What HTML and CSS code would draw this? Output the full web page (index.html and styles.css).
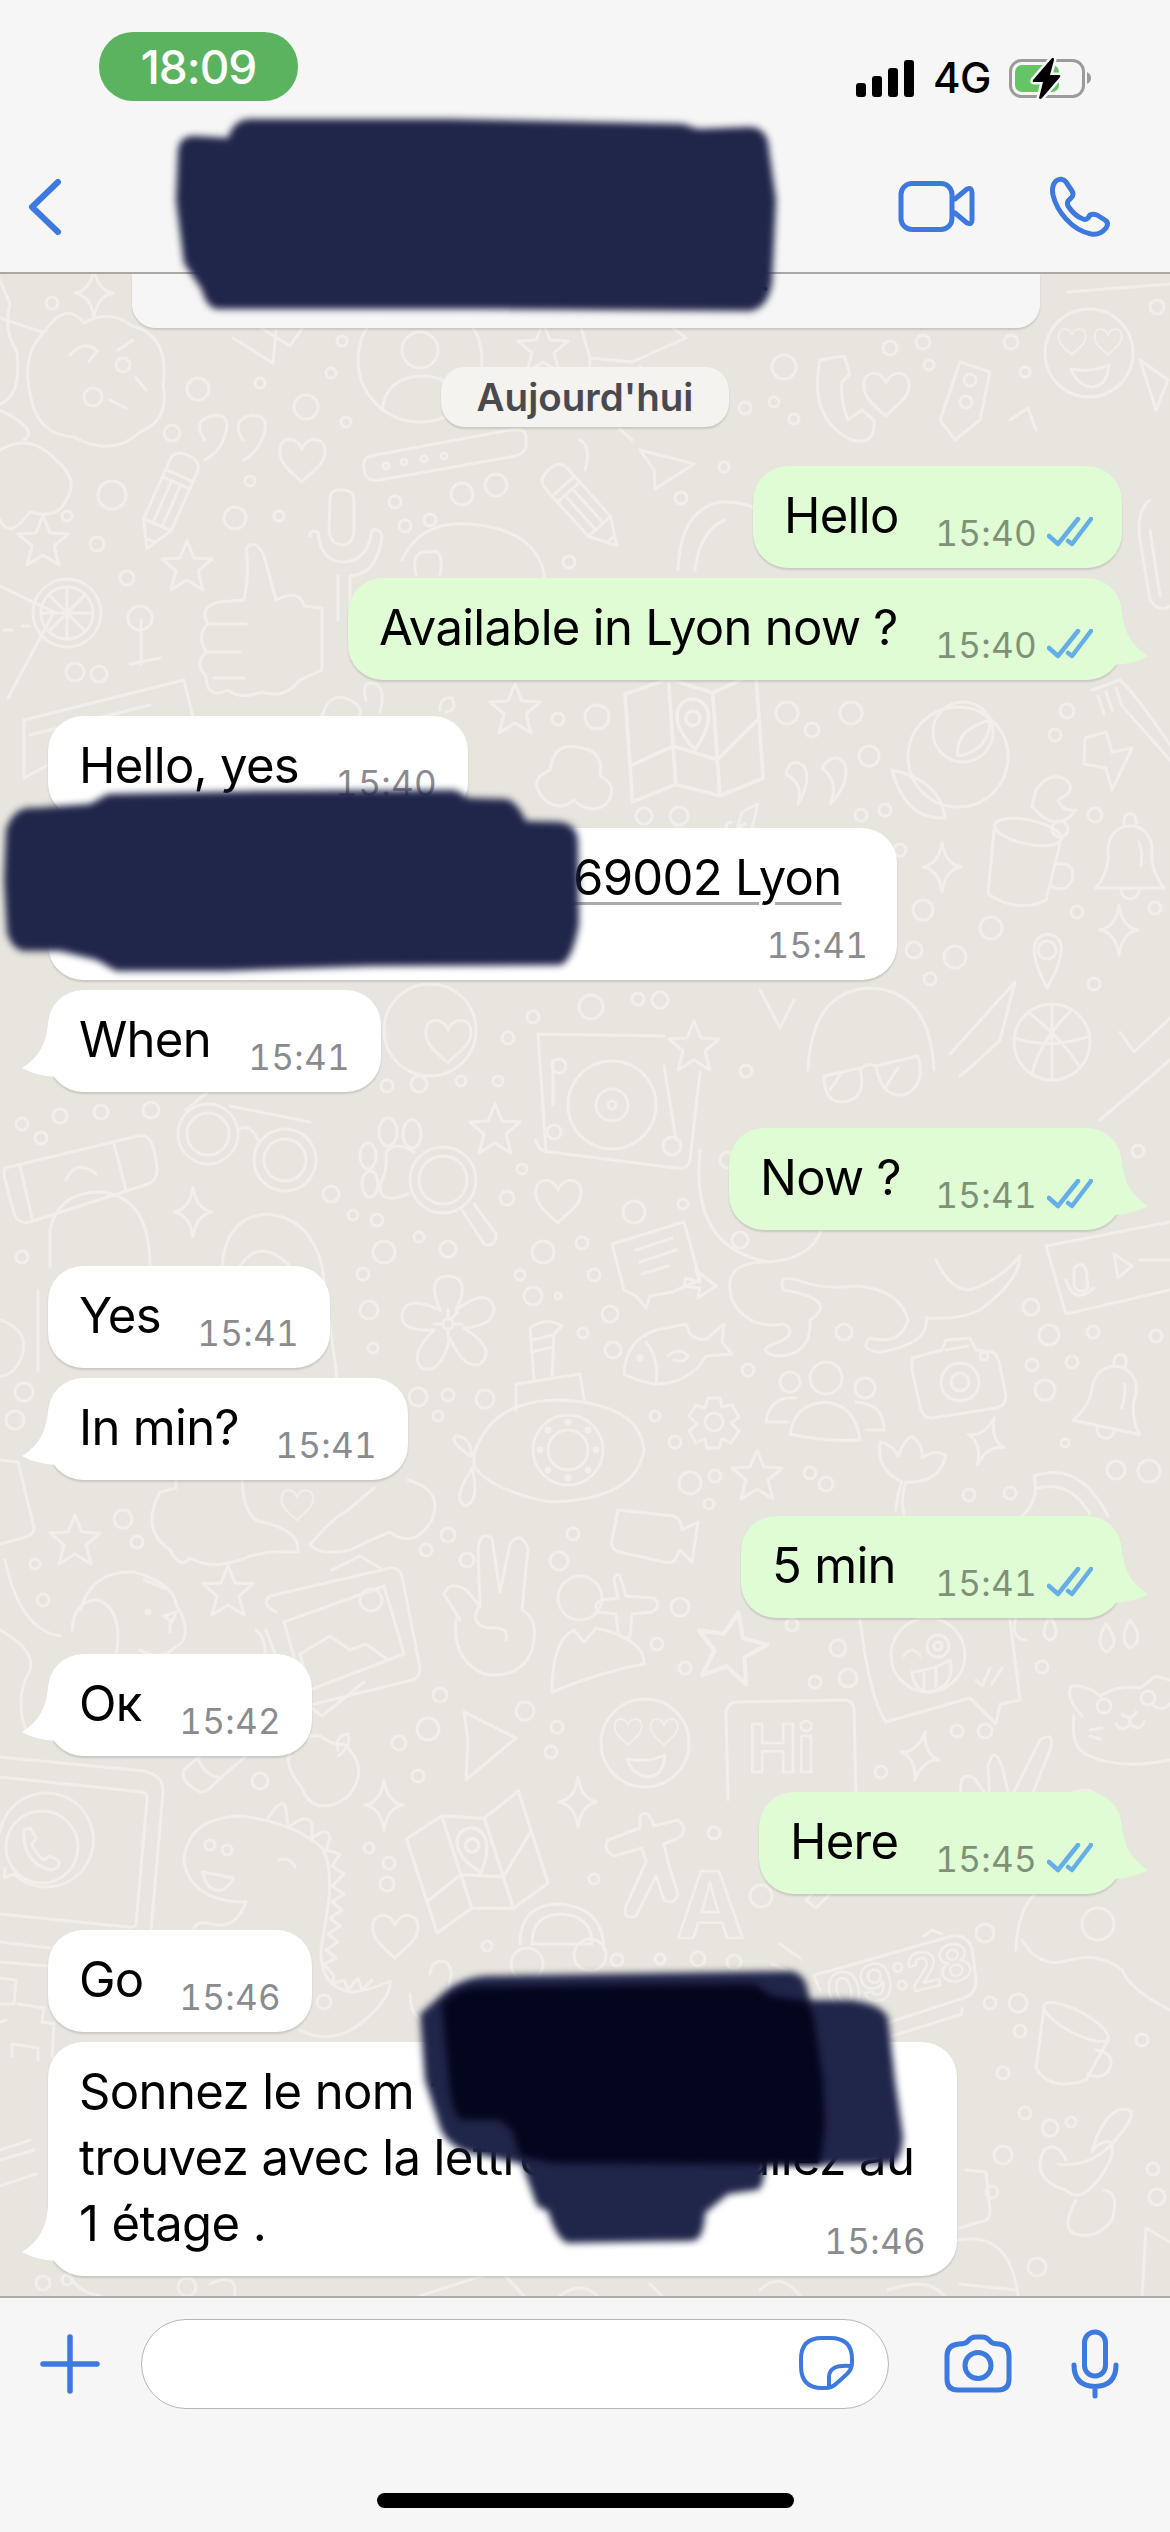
FILE: index.html
```html
<!DOCTYPE html>
<html lang="fr">
<head>
<meta charset="utf-8">
<title>Discussion</title>
<link rel="stylesheet" href="styles.css">
</head>
<body>
<div class="phone">
<svg class="wallpaper" viewBox="0 0 1170 2532" aria-hidden="true">
<defs>
<path id="star" d="M0-25L7-8 25-7 11 5 16 24 0 14-16 24-11 5-25-7-7-8z"/>
<path id="spark" d="M0-25Q3-3 19 0Q3 3 0 25Q-3 3-19 0Q-3-3 0-25z"/>
<path id="heart" d="M0 23C-12 12-24 4-22-10C-20-24-4-22 0-10C6-24 22-22 23-9C24 5 10 12 0 23z"/>
<path id="bell" d="M-34 28Q-20 10-22-10C-22-42 22-42 22-10Q20 10 34 28zM-6-36C-8-50 8-50 6-36M-9 30C-7 42 7 42 9 30M9-18Q13-8 11 6"/>
<g id="face"><circle r="44"/><use href="#heart" transform="translate(-17-12) scale(.6)"/><use href="#heart" transform="translate(19-12) scale(.6)"/><path d="M-18 16Q2 20 20 12Q18 34 2 34Q-12 32-18 16z"/></g>
<g id="pencil"><path d="M-15-38Q-15-50 0-50Q15-50 15-38V26L0 52-15 26zM-15-28H15M-15-20H15M-15 26H15M-5-20V24M5-20V24M-5 43H5"/></g>
<g id="mapsheet"><path d="M-55-38L-18-48 18-34 55-48V40L18 52-18 40-55 52zM-18-48V40M18-34V52M-55 22L-18 8 18 22 55-10"/><path d="M0 12C-22-14-12-30 0-30S22-14 0 12z"/><circle cy="-14" r="6"/></g>
</defs>
<g class="doodle">
<!-- bubbles scattered between the drawings -->
<circle cx="52" cy="303" r="6"/><circle cx="342" cy="341" r="5"/><circle cx="331" cy="373" r="5"/><circle cx="198" cy="389" r="11"/><circle cx="260" cy="383" r="5"/><circle cx="306" cy="407" r="12"/><circle cx="346" cy="422" r="5"/><circle cx="172" cy="433" r="8"/><circle cx="784" cy="367" r="12"/><circle cx="890" cy="348" r="7"/><circle cx="923" cy="342" r="7"/><circle cx="929" cy="365" r="5"/><circle cx="1011" cy="342" r="7"/><circle cx="1025" cy="372" r="5"/><circle cx="794" cy="419" r="5"/><circle cx="1157" cy="307" r="7"/><circle cx="774" cy="402" r="5"/><circle cx="745" cy="408" r="6"/>
<circle cx="112" cy="495" r="14"/><circle cx="235" cy="518" r="11"/><circle cx="250" cy="481" r="5"/><circle cx="279" cy="516" r="5"/><circle cx="67" cy="516" r="5"/><circle cx="97" cy="544" r="7"/><circle cx="127" cy="578" r="7"/><circle cx="462" cy="494" r="11"/><circle cx="496" cy="485" r="11"/><circle cx="395" cy="502" r="6"/><circle cx="430" cy="520" r="6"/><circle cx="405" cy="526" r="6"/><circle cx="569" cy="562" r="6"/><circle cx="681" cy="498" r="6"/><circle cx="724" cy="467" r="5"/><circle cx="75" cy="672" r="9"/><circle cx="99" cy="674" r="8"/><circle cx="558" cy="719" r="6"/><circle cx="597" cy="717" r="12"/><circle cx="787" cy="713" r="11"/><circle cx="851" cy="713" r="11"/><circle cx="812" cy="730" r="7"/><circle cx="869" cy="756" r="10"/><circle cx="1067" cy="711" r="7"/><circle cx="1055" cy="735" r="6"/><circle cx="1095" cy="815" r="7"/><circle cx="885" cy="810" r="6"/><circle cx="861" cy="815" r="6"/><circle cx="644" cy="816" r="8"/><circle cx="679" cy="816" r="9"/><circle cx="1060" cy="829" r="8"/><circle cx="900" cy="850" r="6"/><circle cx="923" cy="910" r="10"/><circle cx="991" cy="928" r="11"/><circle cx="1077" cy="912" r="6"/><circle cx="1155" cy="908" r="6"/><circle cx="914" cy="950" r="8"/><circle cx="955" cy="957" r="11"/><circle cx="930" cy="979" r="6"/><circle cx="1094" cy="984" r="6"/><circle cx="533" cy="1017" r="6"/><circle cx="591" cy="1007" r="12"/><circle cx="638" cy="999" r="6"/><circle cx="660" cy="1000" r="8"/><circle cx="508" cy="1038" r="6"/><circle cx="419" cy="1084" r="8"/><circle cx="461" cy="1081" r="5"/><circle cx="498" cy="1081" r="5"/><circle cx="746" cy="1071" r="6"/><circle cx="387" cy="1086" r="6"/>
<circle cx="22" cy="1124" r="6"/><circle cx="60" cy="1116" r="7"/><circle cx="101" cy="1112" r="7"/><circle cx="151" cy="1110" r="8"/><circle cx="41" cy="1138" r="6"/><circle cx="522" cy="1169" r="5"/><circle cx="507" cy="1198" r="7"/><circle cx="331" cy="1194" r="8"/><circle cx="353" cy="1215" r="5"/><circle cx="377" cy="1220" r="6"/><circle cx="384" cy="1252" r="11"/><circle cx="419" cy="1237" r="5"/><circle cx="448" cy="1249" r="8"/><circle cx="543" cy="1252" r="11"/><circle cx="582" cy="1243" r="6"/><circle cx="634" cy="1212" r="11"/><circle cx="683" cy="1204" r="5"/><circle cx="363" cy="1274" r="6"/><circle cx="369" cy="1310" r="9"/><circle cx="373" cy="1348" r="5"/><circle cx="520" cy="1275" r="5"/><circle cx="533" cy="1296" r="9"/><circle cx="558" cy="1296" r="3"/><circle cx="594" cy="1275" r="6"/><circle cx="610" cy="1314" r="8"/><circle cx="583" cy="1333" r="5"/><circle cx="613" cy="1350" r="8"/><circle cx="485" cy="1399" r="9"/><circle cx="448" cy="1395" r="6"/><circle cx="418" cy="1397" r="9"/><circle cx="438" cy="1416" r="5"/><circle cx="655" cy="1416" r="5"/><circle cx="675" cy="1442" r="6"/><circle cx="748" cy="1370" r="6"/><circle cx="844" cy="1332" r="8"/><circle cx="1049" cy="1335" r="10"/><circle cx="1031" cy="1307" r="8"/><circle cx="1032" cy="1365" r="6"/><circle cx="1072" cy="1362" r="6"/><circle cx="1045" cy="1390" r="10"/><circle cx="1093" cy="1332" r="6"/><circle cx="1156" cy="1336" r="6"/><circle cx="690" cy="1483" r="11"/><circle cx="715" cy="1476" r="6"/><circle cx="709" cy="1504" r="5"/><circle cx="810" cy="1473" r="6"/><circle cx="826" cy="1484" r="7"/><circle cx="969" cy="1495" r="6"/><circle cx="1010" cy="1493" r="6"/><circle cx="1065" cy="1443" r="4"/><circle cx="1116" cy="1470" r="9"/><circle cx="1149" cy="1471" r="11"/><circle cx="24" cy="1392" r="9"/><circle cx="15" cy="1420" r="9"/><circle cx="123" cy="1519" r="9"/><circle cx="137" cy="1542" r="6"/><circle cx="35" cy="1564" r="5"/><circle cx="43" cy="1600" r="6"/><circle cx="448" cy="1535" r="7"/><circle cx="426" cy="1550" r="6"/><circle cx="467" cy="1560" r="7"/><circle cx="559" cy="1561" r="9"/><circle cx="573" cy="1534" r="6"/><circle cx="680" cy="1607" r="9"/><circle cx="657" cy="1644" r="6"/><circle cx="685" cy="1668" r="6"/><circle cx="440" cy="1695" r="7"/><circle cx="525" cy="1711" r="9"/><circle cx="428" cy="1729" r="11"/><circle cx="399" cy="1743" r="7"/><circle cx="557" cy="1727" r="6"/><circle cx="551" cy="1752" r="6"/><circle cx="418" cy="1776" r="6"/><circle cx="260" cy="1781" r="8"/><circle cx="838" cy="1648" r="8"/><circle cx="848" cy="1678" r="9"/><circle cx="815" cy="1682" r="6"/><circle cx="792" cy="1625" r="6"/><circle cx="1042" cy="1667" r="6"/><circle cx="985" cy="1731" r="7"/><circle cx="957" cy="1731" r="6"/><circle cx="881" cy="1772" r="6"/><circle cx="1138" cy="1151" r="6"/><circle cx="22" cy="1257" r="6"/>
<circle cx="369" cy="1848" r="5"/><circle cx="389" cy="1863" r="6"/><circle cx="387" cy="1884" r="7"/><circle cx="594" cy="1879" r="5"/><circle cx="714" cy="1833" r="6"/><circle cx="761" cy="1896" r="11"/><circle cx="487" cy="1946" r="5"/><circle cx="617" cy="1960" r="6"/><circle cx="660" cy="1959" r="5"/><circle cx="698" cy="1959" r="7"/><circle cx="734" cy="1962" r="7"/><circle cx="985" cy="1933" r="9"/><circle cx="990" cy="2003" r="6"/><circle cx="1018" cy="2003" r="9"/><circle cx="1020" cy="2031" r="6"/><circle cx="1142" cy="2040" r="6"/><circle cx="1003" cy="2073" r="6"/><circle cx="1025" cy="2113" r="6"/><circle cx="1050" cy="2128" r="8"/><circle cx="1071" cy="2122" r="5"/><circle cx="1003" cy="2155" r="9"/><circle cx="992" cy="2192" r="6"/><circle cx="1153" cy="2169" r="6"/><circle cx="1157" cy="2197" r="8"/><circle cx="1037" cy="2267" r="9"/><circle cx="43" cy="2283" r="7"/><circle cx="67" cy="2280" r="5"/><circle cx="187" cy="2287" r="9"/><circle cx="324" cy="2002" r="7"/>
<!-- stars, sparkles, hearts -->
<use href="#star" x="543" y="348"/><use href="#star" x="43" y="541"/><use href="#star" x="187" y="566"/><use href="#star" x="515" y="709"/><use href="#star" x="694" y="1046"/><use href="#star" x="495" y="1129"/><use href="#star" x="757" y="1475"/><use href="#star" x="75" y="1540"/><use href="#star" x="228" y="1591"/><use href="#star" transform="translate(731 1647) rotate(12) scale(1.4)"/>
<use href="#spark" x="942" y="867"/><use href="#spark" x="1119" y="930"/><use href="#spark" x="193" y="1212"/><use href="#spark" transform="translate(986 1441) rotate(20)"/><use href="#spark" transform="translate(920 1756) rotate(12)"/><use href="#spark" x="384" y="1805"/><use href="#spark" x="578" y="1802"/><use href="#spark" x="94" y="293"/>
<use href="#heart" x="302" y="459"/><use href="#heart" x="558" y="1200"/><use href="#heart" transform="translate(297 1504) scale(.7)"/><use href="#heart" x="395" y="1935"/><use href="#heart" x="886" y="393"/><use href="#heart" x="448" y="1040"/>
<use href="#face" x="1089" y="353"/><use href="#face" x="645" y="1743"/>
<use href="#pencil" transform="translate(168 501) rotate(24)"/><use href="#pencil" transform="translate(582 507) rotate(-42)"/><use href="#bell" x="1130" y="860"/><use href="#bell" transform="translate(1112 1400) rotate(12)"/>
<use href="#mapsheet" transform="translate(694 735) rotate(-4) scale(1.2)"/><use href="#mapsheet" transform="translate(477 1860) rotate(-18) scale(1.1)"/>
<!-- top -->
<path d="M0 318L42 332M0 404Q22 396 17 352Q3 330 10 304L0 280M45 331Q66 300 84 323Q108 308 132 326Q170 335 163 385Q170 420 140 432Q112 458 74 437Q38 435 31 398Q20 355 45 331zM70 355q14-16 27-4l-8 10M118 350l15-10M110 400l16 8M136 378l10 12"/><circle cx="93" cy="397" r="9"/><circle cx="123" cy="365" r="7"/>
<path d="M233 338L273 363 276 330M258 326L290 346 305 324M0 410Q40 430 24 440M205 440Q190 420 215 415Q230 414 226 432T205 460M243 440Q230 420 252 415Q270 416 264 434T244 460"/>
<circle cx="420" cy="360" r="62"/><circle cx="420" cy="350" r="18"/><path d="M382 410Q386 378 420 376T462 410M580 324L590 358 632 362 686 338 668 324M590 358Q586 400 632 440M640 366L660 420"/>
<path d="M820 360Q808 420 852 440Q876 446 874 420L862 410 848 420Q840 400 842 382L850 374 844 356zM940 420L960 362 990 372 980 420 955 440zM1060 270L1170 262M1068 292L1170 284M1010 420l18-12 8 22 M1140 360L1168 380 1156 410z"/><circle cx="970" cy="380" r="6"/><circle cx="966" cy="402" r="6"/>
<path d="M370 456L510 430Q528 426 526 442Q528 454 510 457L380 480Q364 482 364 468Q362 459 370 456z"/><circle cx="386" cy="466" r="3"/><circle cx="404" cy="462" r="3"/><circle cx="424" cy="459" r="3"/><circle cx="444" cy="456" r="3"/><path d="M640 450L694 464 655 489 654 470zM580 440q12 6 5 30M0 450Q30 432 56 460Q80 480 66 500Q58 520 30 512Q10 540 0 520"/>
<path d="M330 500Q330 488 343 490Q355 490 354 504V530Q353 545 342 545Q330 544 329 530zM310 536Q308 530 318 532Q320 562 345 562Q368 560 372 530Q380 528 382 536Q378 574 350 576V620M338 620V576M678 570Q680 510 720 502Q760 500 780 530M695 570Q700 530 725 520"/>
<!-- thumb, pizza, poster -->
<path d="M244 600Q250 570 246 548Q256 538 264 556L276 600Q300 588 304 606L322 608V670L300 680Q284 700 262 692Q240 700 228 690Q206 700 206 676Q194 664 206 652Q196 634 208 624Q198 606 220 602zM206 652H240M208 624H246M214 678H244M402 560Q420 520 470 524Q540 530 545 580M416 575Q410 550 430 552Q445 548 440 575"/><circle cx="67" cy="613" r="34"/><circle cx="67" cy="613" r="26"/><path d="M67 587V639M41 613H93M49 595L85 631M49 631L85 595M0 586L54 612 8 698M4 630h8M22 626h8M141 664V620M130 664L160 658M24 720L184 680 194 722M30 735L150 705M24 720V778L46 766"/><circle cx="140" cy="618" r="12"/>
<path d="M366 700Q360 680 376 684Q386 690 380 712M322 716Q330 690 350 700T352 724M440 710q0-14 12-12q6 12-6 14"/>
<!-- right side, upper -->
<path d="M1150 500Q1136 510 1140 540L1150 600Q1160 614 1170 606M1150 530L1160 596M1092 690L1120 680Q1134 692 1170 745M1098 696l6 18M1106 692l6 18M1116 688l6 18M1124 708L1170 760"/>
<circle cx="958" cy="757" r="50"/><circle cx="963" cy="732" r="30"/><path d="M958 756Q954 730 990 720Q990 750 958 756zM892 770Q940 780 945 818Q905 820 892 770zM1085 738L1106 732 1112 752 1132 748 1112 790 1106 768 1084 764zM1036 790Q1050 770 1066 780Q1078 790 1058 800Q1062 812 1076 810Q1056 836 1032 806z"/>
<path d="M786 774Q790 756 804 766Q812 780 798 804Q804 784 786 774zM822 768Q834 750 845 764Q850 784 830 804Q840 782 822 768zM545 800Q526 780 550 770Q554 740 582 748Q604 752 600 776Q620 786 606 804Q590 816 574 800Q560 812 545 800zM738 826L742 812 758 804 752 828M738 826a6 5 0 1 1-7-4M752 828a6 5 0 1 1-7-4"/>
<ellipse cx="1028" cy="832" rx="34" ry="12" transform="rotate(12 1028 832)"/><path d="M994 830L988 894Q1018 914 1046 900L1060 844M1056 864Q1076 862 1072 880Q1066 894 1050 886M1047 988Q1022 940 1046 934Q1076 936 1047 988z"/><circle cx="1047" cy="950" r="9"/>
<!-- record player, dog, glasses, basketball -->
<path d="M546 1150L538 1034 664 1036M700 1072L690 1160Q688 1170 676 1168L550 1152Q538 1152 536 1140M664 1066L676 1140M553 1060V1104"/><circle cx="612" cy="1105" r="44"/><circle cx="612" cy="1105" r="16"/><circle cx="612" cy="1105" r="4"/><circle cx="672" cy="1146" r="9"/><circle cx="559" cy="1066" r="7"/><circle cx="554" cy="1132" r="7"/>
<path d="M808 1070Q812 990 870 988Q930 990 934 1070M760 990L780 1028 794 1000M824 1076L860 1068Q868 1100 842 1102Q824 1102 824 1076zM876 1066L918 1056Q926 1084 906 1094Q882 1100 876 1066zM860 1070Q866 1062 876 1066M830 1090l12-18M886 1086l12-18M950 1054L1015 982 1000 1040Q980 1060 960 1076"/><circle cx="430" cy="1030" r="46"/>
<circle cx="1052" cy="1042" r="38"/><path d="M1028 1012Q1064 1040 1080 1068M1072 1010Q1040 1040 1032 1074M1015 1038Q1050 1050 1090 1036M1052 1004V1080M1120 1032L1134 1052 1170 1018M1100 1120L1170 1060M700 1150Q690 1250 770 1262Q830 1256 824 1200"/><circle cx="728" cy="1160" r="8"/><circle cx="740" cy="1240" r="8"/>
<!-- goggles, flask, search -->
<circle cx="208" cy="1134" r="30"/><circle cx="208" cy="1134" r="21"/><circle cx="285" cy="1160" r="31"/><circle cx="285" cy="1160" r="21"/><path d="M238 1130Q250 1122 258 1140M186 1110L222 1080M230 1106L310 1122M5 1168L138 1136Q152 1132 156 1160Q160 1180 148 1184L30 1222Q16 1226 12 1206L4 1176Q4 1170 5 1168zM20 1166L32 1218M114 1144L126 1190M66 1180q10-22 30-6M50 1266V1230Q58 1192 100 1192Q150 1196 150 1266M222 1266Q226 1216 268 1214Q310 1218 322 1266L336 1370Q340 1400 322 1400M38 1290V1370M240 1266q20-30 50 0"/>
<circle cx="443" cy="1180" r="33"/><circle cx="443" cy="1180" r="24"/><path d="M462 1210L484 1244Q496 1248 496 1234L474 1204M408 1194Q378 1206 380 1184Q388 1172 386 1152Q396 1140 414 1152"/><ellipse cx="368" cy="1156" rx="8" ry="13"/><ellipse cx="388" cy="1132" rx="9" ry="14"/><ellipse cx="412" cy="1134" rx="9" ry="14"/><ellipse cx="370" cy="1184" rx="8" ry="13"/>
<!-- note, giraffe, player -->
<path d="M612 1244L684 1222 700 1280 672 1292 650 1296 646 1308 636 1296 624 1290zM636 1250L672 1238M640 1262L676 1250M642 1274L668 1266M686 1278l14 4-4-12 20 16-18 12 2-10-16-2zM770 1262Q720 1260 732 1300Q748 1330 784 1324Q800 1334 774 1344Q756 1350 776 1356Q812 1356 810 1320Q840 1300 784 1290Q776 1274 798 1280Q820 1290 858 1286Q900 1290 908 1320Q900 1346 870 1338Q858 1350 880 1352Q930 1344 926 1318Q960 1320 980 1310Q1020 1280 1020 1256Q1000 1280 970 1290Q950 1290 936 1260M1046 1246L1170 1222M1046 1246L1066 1314 1170 1290M1074 1268q8-8 12 2l2 18q-8 8-14-2zM1066 1280q8 26 28 8M1114 1254L1132 1266 1118 1278zM1140 1260H1170"/>
<!-- flower -->
<path d="M440 1310Q426 1276 448 1276Q472 1278 456 1310Q488 1286 494 1308Q494 1326 464 1328Q498 1350 480 1364Q464 1370 450 1338Q440 1376 422 1368Q408 1356 434 1330Q400 1332 402 1314Q406 1294 440 1310zM448 1318V1310M454 1324h8M442 1324h-8M448 1330v8M452 1318l6-6"/><circle cx="448" cy="1324" r="5"/>
<!-- submarine -->
<path d="M474 1455Q490 1400 560 1400Q640 1404 644 1450Q636 1500 550 1502Q490 1490 474 1466zM516 1410L516 1384 580 1374 584 1400M534 1380L530 1328Q546 1316 562 1326L554 1334 552 1376M532 1340l22-5M532 1352l21-5M474 1466Q450 1500 466 1506Q480 1500 472 1468M470 1456Q448 1440 456 1436Q470 1436 472 1456"/><circle cx="568" cy="1450" r="35"/><circle cx="568" cy="1450" r="20"/><circle class="dot" cx="568" cy="1422" r="2"/><circle class="dot" cx="568" cy="1478" r="2"/><circle class="dot" cx="540" cy="1450" r="2"/><circle class="dot" cx="596" cy="1450" r="2"/><circle class="dot" cx="588" cy="1430" r="2"/><circle class="dot" cx="548" cy="1470" r="2"/><circle class="dot" cx="548" cy="1430" r="2"/><circle class="dot" cx="588" cy="1470" r="2"/>
<!-- fish, people, camera, gear -->
<path d="M624 1374Q626 1334 666 1328L686 1324 690 1334Q704 1344 710 1336L724 1324 722 1342 732 1354 706 1356Q690 1384 654 1384 634 1380 624 1374zM646 1342Q660 1360 656 1384M668 1356q10-10 20 0q-4 8-14 4"/><circle cx="640" cy="1358" r="2"/>
<circle cx="826" cy="1378" r="16"/><circle cx="790" cy="1382" r="10"/><circle cx="865" cy="1388" r="10"/><path d="M790 1434Q794 1404 826 1402Q856 1406 860 1440Q826 1442 790 1434zM788 1422H766Q770 1396 796 1398M866 1430L884 1430Q884 1404 856 1402M912 1358L942 1350 946 1340 970 1338 976 1350 992 1352Q998 1354 1000 1366L1006 1396Q1006 1406 996 1408L932 1418Q922 1418 920 1406L912 1370zM946 1350l22-4"/><circle cx="960" cy="1382" r="19"/><circle cx="960" cy="1382" r="9"/><circle cx="984" cy="1356" r="4"/>
<path d="M708 1398h12l2 9 10-2 7 12-8 6 8 8-8 12-9-4-3 9h-12l-2-9-9 4-7-12 8-7-8-8 7-11 9 3z"/><circle cx="714" cy="1422" r="9"/><path d="M896 1510Q898 1490 902 1482Q876 1470 880 1442Q892 1444 898 1456Q904 1440 912 1436Q924 1446 922 1458Q936 1448 946 1456Q938 1484 906 1482Q900 1500 904 1514M1022 1516Q1040 1500 1034 1476Q1080 1460 1108 1516M1038 1488Q1070 1480 1090 1514"/>
<path d="M0 1320Q30 1330 22 1356Q14 1376 0 1376M0 1460L18 1462 34 1528Q34 1536 22 1538L0 1544M242 1480Q244 1520 262 1522Q300 1530 298 1552Q260 1550 240 1560Q210 1570 190 1558Q180 1570 170 1550Q140 1530 160 1492L176 1488V1480M408 1480Q444 1490 432 1520Q414 1550 390 1532Q370 1540 350 1550Q320 1556 310 1545Q330 1520 348 1510L374 1488"/>
<!-- film camera, photo, hand, person, dog -->
<path d="M618 1510L674 1516Q682 1520 682 1530L698 1522 692 1562 680 1550 676 1558Q674 1564 664 1562L620 1552Q610 1550 612 1540zM276 1612Q260 1604 270 1596L390 1568Q400 1568 402 1576L420 1668Q420 1678 412 1680L306 1706Q292 1706 290 1694L266 1630M284 1622L384 1586 404 1654 304 1692zM310 1690L300 1654 330 1636 350 1650 366 1644 388 1660M332 1570L360 1556 380 1568M256 1630Q268 1640 264 1660M312 1708L322 1716 364 1682"/><circle cx="371" cy="1600" r="11"/>
<path d="M460 1620L444 1594Q450 1580 466 1590L480 1606 478 1550Q480 1530 492 1538L500 1592 510 1544Q520 1530 528 1548L522 1610Q540 1620 532 1650Q520 1680 484 1674Q452 1660 456 1620M478 1608Q470 1624 488 1628Q510 1626 506 1640"/><circle cx="580" cy="1598" r="22"/><path d="M552 1692Q552 1640 574 1630L584 1642 596 1628Q646 1640 644 1664Q600 1672 552 1692zM620 1576l6 20 28 2q8 8-2 14l-20 2-2 22q-8 6-12-4l-2-18-18-2q-6-8 4-12l16-2-4-18q2-8 6-4z"/>
<path d="M80 1610Q92 1570 134 1572Q174 1584 176 1604Q196 1638 174 1648Q160 1662 140 1650M72 1630Q74 1600 98 1600Q124 1610 116 1656M144 1580l20 8M5 1560Q20 1630 60 1636M0 1630Q36 1650 30 1670Q14 1698 26 1730M164 1616l12-4-4 10zM170 1624v8"/><circle class="dot" cx="148" cy="1612" r="2"/>
<path d="M464 1712L516 1738 466 1780 468 1740zM302 1788Q280 1762 294 1746Q304 1734 320 1736Q334 1746 344 1744Q362 1760 358 1778Q350 1806 320 1806Q306 1802 302 1788zM338 1750Q334 1736 348 1734Q352 1746 338 1756M200 1756L184 1770Q180 1782 200 1792Q208 1792 214 1784L248 1754M198 1758Q204 1776 222 1778"/>
<!-- emoji note, greeting card, cat -->
<path d="M860 1620Q870 1700 886 1722L970 1698 996 1724 1000 1704 1020 1700 1010 1620M1026 1640q-16-2-10-22l6-6M1050 1616q12 20 0 24q-12-4 0-24zM1106 1624q16 20 0 28q-12-8 0-28zM1130 1620q16 20 0 28q-12-8 0-28z"/><circle cx="928" cy="1655" r="37"/><path d="M912 1672Q934 1670 950 1660Q956 1686 930 1692Q914 1692 912 1672zM924 1672v16M936 1668v18M904 1656q8-12 16 0M976 1680l6 6 8-18M992 1684l10-16"/><circle cx="938" cy="1646" r="11"/><circle cx="938" cy="1646" r="4"/>
<path d="M736 1702L844 1700Q852 1700 854 1708L856 1800M726 1712Q728 1702 736 1702M726 1712L728 1800"/><text class="doodle-text" x="748" y="1772" font-size="66">Hi</text>
<path d="M1082 1716Q1064 1696 1072 1686Q1086 1684 1100 1696Q1120 1684 1140 1688L1156 1676 1170 1680M1074 1716Q1070 1750 1090 1756Q1120 1770 1170 1760M1122 1714q8 8 14-2M1130 1718v6q-8 10-14 0M1130 1724q10 8 14-2M1154 1706q10 6 16-2M1090 1730l12-2M1090 1736l10 3"/><circle cx="1104" cy="1706" r="7"/><circle cx="1148" cy="1698" r="7"/><path d="M962 1800Q956 1770 974 1778L990 1800 988 1766Q994 1744 1002 1766L1010 1800 1040 1740Q1056 1730 1050 1750L1030 1800M1060 1800Q1090 1780 1100 1800"/>
<!-- call card, dinosaur, letters -->
<path d="M0 1757L144 1771Q164 1776 163 1792L151 1930M0 1777L142 1792Q148 1793 147 1800L136 1924Q135 1928 128 1927L0 1914M0 1942L50 1948M0 1962L48 1966"/><path d="M5 1868L4 1878 14 1874A47 47 0 1 0 0 1832"/><path d="M24 1830Q22 1862 50 1870Q62 1868 58 1860L50 1856 44 1860Q34 1852 32 1844L36 1838 30 1828z"/><circle cx="42" cy="1847" r="36"/>
<path d="M194 1928Q198 1920 212 1924Q236 1930 246 1902Q192 1902 184 1862Q186 1818 240 1816Q294 1822 322 1848Q332 1864 329 1900L321 1950Q320 1988 352 1992Q372 1990 390 1981Q392 1998 360 2024Q330 2046 300 2030M268 1818Q284 1794 286 1810L288 1828Q306 1812 312 1824L312 1838Q328 1826 330 1838L326 1850 340 1854 332 1866 344 1874 332 1886 344 1894 332 1902 342 1910 330 1918 340 1926 328 1934 338 1942 326 1950 336 1958 324 1964 334 1976 332 1984 344 1980 348 1990 358 1978 362 1990 372 1980M203 1872Q206 1892 222 1890Q232 1884 233 1878zM279 1860Q290 1856 295 1867"/><circle cx="210" cy="1845" r="5"/><circle cx="227" cy="1850" r="5"/>
<path d="M608 1840L640 1828 640 1816Q648 1808 654 1826L678 1820Q690 1830 678 1838L664 1844 668 1862 678 1894Q674 1906 664 1900L656 1876 636 1916Q622 1920 626 1906L646 1862 642 1848 614 1856Q602 1850 608 1840z"/><text class="doodle-text" x="676" y="1938" font-size="92">A</text>
<path d="M520 1944Q520 1904 560 1904Q604 1908 604 1950M532 1944Q532 1914 562 1914Q592 1916 592 1944zM430 1974Q432 1958 446 1962Q454 1970 450 1980L446 2010M410 1994Q410 2012 420 2020"/><circle cx="527" cy="1964" r="16"/><circle cx="590" cy="1955" r="16"/>
<path d="M826 1972L952 1936Q966 1934 972 1948L976 1980Q976 1994 964 1998L884 2024M820 1990L814 1976Q816 1974 826 1972M892 2036L962 2014V2008M924 1936l8-6 10 4M780 1944l20 14M772 1964l14 6M806 1900l24-26 12 8-26 26z"/><text class="doodle-text" x="832" y="2012" font-size="50" transform="rotate(-14 832 2012)">09:28</text>
<circle cx="1098" cy="1924" r="16"/><path d="M1016 1950Q1018 1890 1060 1880Q1090 1860 1080 1890M1170 2010Q1130 1990 1122 1970Q1100 1952 1070 1960Q1040 1970 1022 1940M0 1978L16 1980 14 2004H0M18 2004L44 2008 42 2022 54 2024 52 2056M0 2022L6 2020M12 2056V2044L38 2048V2060"/>
<ellipse cx="1076" cy="2022" rx="36" ry="11" transform="rotate(28 1076 2022)"/><path d="M1044 2008L1036 2068Q1050 2092 1086 2080L1108 2040M1096 2050Q1118 2054 1108 2072Q1098 2080 1088 2074M1058 2164Q1100 2170 1130 2120Q1136 2106 1118 2110Q1100 2120 1092 2152Q1100 2140 1110 2142Q1118 2154 1098 2180Q1080 2204 1066 2190Q1030 2180 1044 2150Q1056 2140 1066 2160M1076 2200Q1060 2230 1076 2234Q1096 2240 1112 2220Q1120 2192 1104 2190M0 2150L30 2140M0 2160L34 2150M0 2186L36 2174M966 2170L986 2172 990 2210Q990 2222 980 2222L960 2228M958 2240Q1010 2230 1018 2296M960 2284L1016 2290M1146 2228L1170 2242M1146 2228L1142 2296"/>
<path d="M66 2260Q68 2290 100 2296M210 2284Q240 2270 234 2300M420 2296L500 2270 524 2296M560 2296Q580 2280 598 2296M650 2284L662 2296M760 2290Q780 2270 800 2296M888 2290Q930 2276 944 2296"/>
</g>
</svg>
<header class="top">
<div class="status">
<div class="clock">18:09</div>
<div class="indicators">
<svg width="58" height="37" viewBox="856 59 58 37"><rect x="856" y="82" width="10" height="14" rx="3"/><rect x="872" y="75" width="10" height="21" rx="3"/><rect x="888" y="67" width="10" height="29" rx="3"/><rect x="904" y="59" width="10" height="37" rx="3"/></svg>
<span class="network">4G</span>
<svg width="84" height="46" viewBox="1008 54 84 46"><rect x="1010.5" y="59.500" width="73" height="36" rx="11" fill="none" stroke="#9b9b9b" stroke-width="3"/><path d="M1087 71q4 2 4 6t-4 6z" fill="#9b9b9b"/><rect x="1015" y="64" width="44" height="27" rx="7" fill="#65c466"/><path d="M1052 57L1033 79Q1032 81 1034 81H1043L1039 97Q1040 99 1042 97L1060 76Q1061 74 1059 74H1050L1054 59Q1054 56 1052 57z" stroke="#f6f6f6" stroke-width="5" paint-order="stroke"/></svg>
</div>
</div>
<nav class="nav">
<svg class="line-icon back" width="38" height="62" viewBox="26 176 38 62"><path d="M58 182L32 207 58 232" stroke-width="6"/></svg>
<div class="calls">
<svg class="line-icon" width="80" height="56" viewBox="897 176 80 56"><rect x="901" y="180.500" width="51" height="46" rx="11"/><path d="M955 196L967 186Q972 184 972 190V217Q972 222 967 220L955 210"/></svg>
<svg class="line-icon" width="64" height="64" viewBox="1048 172 64 64"><path d="M1056 178C1059 175 1064 176 1066 179L1072 188C1074 191 1073 193 1071 195L1068 198C1067 200 1067 201 1068 203C1072 209 1077 214 1083 216C1085 217 1087 216 1088 215L1090 212C1092 211 1094 211 1097 212L1105 217C1108 219 1108 222 1106 225C1102 230 1097 232 1091 231C1072 227 1057 209 1053 192C1052 187 1052 182 1056 178z"/></svg>
</div>
</nav>
</header>
<main class="chat">
<div class="notice">.</div>
<div class="day">Aujourd'hui</div>
<div class="msg out" style="width:369px"><span class="text">Hello</span><span class="time">15:40</span><svg class="ticks" viewBox="0 0 46 30"><path d="M2 19l9 8L31 2M21 24l4 3L44 2"/></svg></div>
<div class="msg out" style="width:774px"><span class="text">Available in Lyon now ?</span><span class="time">15:40</span><svg class="ticks" viewBox="0 0 46 30"><path d="M2 19l9 8L31 2M21 24l4 3L44 2"/></svg><svg class="tail" viewBox="0 0 34 62"><path d="M0 0H8Q9 32 34 47Q20 55 0 56z"/></svg></div>
<div class="msg in turn" style="width:420px"><span class="text">Hello, yes</span><span class="time">15:40</span></div>
<div class="msg in address" style="width:849px"><span class="text link">69002 Lyon</span><span class="time">15:41</span></div>
<div class="msg in" style="width:333px"><span class="text">When</span><span class="time">15:41</span><svg class="tail" viewBox="0 0 34 62"><path d="M0 0H8Q9 32 34 47Q20 55 0 56z"/></svg></div>
<div class="msg out turn" style="width:393px"><span class="text">Now ?</span><span class="time">15:41</span><svg class="ticks" viewBox="0 0 46 30"><path d="M2 19l9 8L31 2M21 24l4 3L44 2"/></svg><svg class="tail" viewBox="0 0 34 62"><path d="M0 0H8Q9 32 34 47Q20 55 0 56z"/></svg></div>
<div class="msg in turn" style="width:282px"><span class="text">Yes</span><span class="time">15:41</span></div>
<div class="msg in" style="width:360px"><span class="text">In min?</span><span class="time">15:41</span><svg class="tail" viewBox="0 0 34 62"><path d="M0 0H8Q9 32 34 47Q20 55 0 56z"/></svg></div>
<div class="msg out turn" style="width:381px"><span class="text">5 min</span><span class="time">15:41</span><svg class="ticks" viewBox="0 0 46 30"><path d="M2 19l9 8L31 2M21 24l4 3L44 2"/></svg><svg class="tail" viewBox="0 0 34 62"><path d="M0 0H8Q9 32 34 47Q20 55 0 56z"/></svg></div>
<div class="msg in turn" style="width:264px"><span class="text">Ок</span><span class="time">15:42</span><svg class="tail" viewBox="0 0 34 62"><path d="M0 0H8Q9 32 34 47Q20 55 0 56z"/></svg></div>
<div class="msg out turn" style="width:363px"><span class="text">Here</span><span class="time">15:45</span><svg class="ticks" viewBox="0 0 46 30"><path d="M2 19l9 8L31 2M21 24l4 3L44 2"/></svg><svg class="tail" viewBox="0 0 34 62"><path d="M0 0H8Q9 32 34 47Q20 55 0 56z"/></svg></div>
<div class="msg in turn" style="width:264px"><span class="text">Go</span><span class="time">15:46</span></div>
<div class="msg in long" style="width:909px"><div class="lines"><span>Sonnez le nom ‘</span><span class="split"><span>trouvez avec la lettre</span><span>allez au</span></span><span>1 étage .</span></div><span class="time">15:46</span><svg class="tail" viewBox="0 0 34 62"><path d="M0 0H8Q9 32 34 47Q20 55 0 56z"/></svg></div>
</main>
<footer class="composer">
<svg class="line-icon plus" width="62" height="66" viewBox="39 2331 62 66"><path d="M43 2364H97M70 2337V2391" stroke-width="5.500"/></svg>
<div class="field"><svg class="line-icon" width="58" height="58" viewBox="797 2336 58 58"><path d="M821 2339H829Q851 2339 851 2360V2364Q851 2370 846 2375L836 2384Q831 2389 824 2389H821Q800 2389 800 2367V2360Q800 2339 821 2339zM850 2367Q828 2365 828 2378V2388" stroke-width="4"/></svg></div>
<svg class="line-icon camera" width="70" height="62" viewBox="943 2333 70 62"><path d="M959 2344Q966 2344 968 2341Q971 2337 976 2337H982Q987 2337 990 2341Q992 2344 999 2344Q1009 2345 1009 2356V2379Q1009 2390 998 2390H958Q947 2390 947 2379V2356Q947 2345 959 2344z"/><circle cx="978" cy="2365.500" r="13"/></svg>
<svg class="line-icon mic" width="50" height="72" viewBox="1070 2329 50 72"><rect x="1084.500" y="2333" width="21" height="44" rx="10.500"/><path d="M1074 2366Q1074 2387 1095 2387.500Q1116 2387 1116 2366M1095 2388V2397"/></svg>
<div class="home"></div>
</footer>
<svg class="marker" viewBox="0 0 1170 2532" aria-hidden="true">
<g class="ink">
<path d="M178 150Q180 135 195 136L228 138Q234 118 252 119L448 119L683 124L698 129L750 127Q768 128 769 150L776 200L772 283Q768 308 750 311L478 309L216 309Q206 306 202 290L184 263L176 200z"/>
<path d="M6 830Q14 806 34 808L90 804L108 794L261 791L455 790L469 798L505 799Q516 800 526 821L560 822Q576 824 578 840L579 924Q572 962 560 965L373 966L224 971H116L97 960L60 951H22Q10 946 7 932L4 880z"/>
<path d="M420 2014L448 1989Q464 1978 485 1976L791 1971Q804 1974 807 1987L810 2000H851Q882 2004 888 2018L895 2080L903 2136Q902 2160 892 2164L821 2165H765Q764 2188 757 2190L728 2194L705 2213Q704 2240 692 2241L567 2243Q556 2238 548 2211L537 2206L522 2164L466 2152Q446 2144 440 2127L425 2080z"/>
</g>
<path class="ink dark" d="M442 2004Q458 1987 478 1987L754 1984L772 1996L806 2001Q814 2010 817 2040L823 2080L825 2127L820 2164L552 2163L520 2156L512 2130L500 2120H463Q454 2118 450 2090z"/>
</svg>
</div>
</body>
</html>
```
FILE: styles.css
```css
* { box-sizing: border-box; }
body { margin: 0; background: #f6f6f6; font-family: Inter, "Liberation Sans", sans-serif; }
svg { display: block; flex: none; }

.phone {
  position: relative;
  display: flex;
  flex-direction: column;
  width: 1170px;
  height: 2532px;
  overflow: hidden;
  isolation: isolate;
  background: #e8e5df;
}

/* Chat wallpaper */
.wallpaper, .marker { position: absolute; inset: 0; width: 1170px; height: 2532px; }
.wallpaper { z-index: -1; }
.doodle { fill: none; stroke: #f2efea; stroke-width: 3; stroke-linecap: round; stroke-linejoin: round; }
.doodle .dot { fill: #f2efea; }
.doodle-text { font-family: Inter, sans-serif; font-weight: 700; stroke-width: 2.5; }

/* Header */
.top { height: 274px; background: #f6f6f6; border-bottom: 2px solid #aaa8a5; }
.status { display: flex; justify-content: space-between; padding: 32px 78px 0 99px; height: 118px; }
.clock {
  width: 199px; height: 69px; border-radius: 34px; background: #5cb35f; color: #fff;
  font-size: 46px; font-weight: 450; line-height: 71px; text-align: center; letter-spacing: -1px;
}
.indicators { display: flex; align-items: center; height: 92px; }
.network { width: 94px; padding-left: 19px; font-size: 42px; font-weight: 450; letter-spacing: -.5px; line-height: 50px; }
.nav { display: flex; justify-content: space-between; align-items: center; padding: 57px 58px 0 26px; }
.calls { display: flex; align-items: center; gap: 71px; }
.line-icon { fill: none; stroke: #3d79df; stroke-width: 5; stroke-linecap: round; stroke-linejoin: round; }

/* Conversation */
.chat { display: flex; flex-direction: column; height: 2022px; padding: 0 48px; }
.notice {
  width: 908px; height: 54px; margin-left: 84px; padding-left: 628px; flex: none;
  border-radius: 0 0 24px 24px; background: rgba(248, 248, 248, .93); box-shadow: 0 2px 2px rgba(0, 0, 0, .13);
  font-size: 34px; line-height: 9px;
}
.day {
  align-self: center; width: 288px; height: 60px; margin: 39px 0 29px;
  border-radius: 24px; background: #f4f3ef; box-shadow: 0 2px 2px rgba(0, 0, 0, .13);
  color: #4a4a4e; font-size: 38.5px; font-weight: 600; line-height: 60px; text-align: center;
}
.msg {
  position: relative; flex: none; display: flex; height: 102px; margin-top: 10px; padding: 0 31px;
  border-radius: 35px; background: #fff; box-shadow: 0 2px 2px rgba(0, 0, 0, .13);
}
.out { align-self: flex-end; background: #dffcd4; padding-right: 29px; }
.in { align-self: flex-start; }
.turn { margin-top: 36px; }
.text { font-size: 49px; line-height: 60px; padding-top: 20px; letter-spacing: -.7px; white-space: nowrap; }
.time { margin-left: auto; align-self: flex-end; font-size: 35px; line-height: 44px; padding-bottom: 13px; color: #8b8b8f; letter-spacing: .3px; font-variant-numeric: tabular-nums; }
.out .time { color: #7f9179; }
.ticks { width: 46px; height: 30px; margin: 51px 0 0 10px; fill: none; stroke: #66aee8; stroke-width: 4.5; stroke-linecap: round; stroke-linejoin: round; }
.tail { position: absolute; right: -26px; bottom: 9px; width: 34px; height: 62px; fill: #dffcd4; }
.in .tail { right: auto; left: -26px; transform: scaleX(-1); fill: #fff; }
.address { height: 152px; }
.address .text { margin-left: 494px; }
.link { align-self: flex-start; text-decoration: underline; text-decoration-color: #aaa; text-decoration-thickness: 3px; text-underline-offset: 7px; }
.address .time { position: relative; margin-left: -75px; }
.long { height: 234px; }
.lines { display: flex; flex-direction: column; width: 839px; padding-top: 17px; font-size: 49px; line-height: 66px; letter-spacing: -.6px; white-space: nowrap; }
.split { display: flex; justify-content: space-between; }
.long .time { margin-left: -90px; }

/* Composer */
.composer {
  display: grid; grid-template-columns: 102px 748px 54px 127px 1fr;
  align-content: start; align-items: center; flex: 1;
  padding: 21px 0 0 39px; background: #f6f6f6; border-top: 2px solid #adaba8;
}
.field { display: flex; align-items: center; justify-content: flex-end; height: 90px; padding-right: 32px; border: 1px solid #b6b6b6; border-radius: 45px; background: #fff; }
.camera { grid-column: 4; }
.mic { grid-column: 5; }
.home { grid-column: 1 / -1; justify-self: start; width: 417px; height: 15px; margin: 84px 0 0 338px; border-radius: 8px; background: #000; }

/* Marker strokes over private details */
.marker { z-index: 2; pointer-events: none; }
.ink { fill: #20254a; filter: blur(3.5px); }
.ink.dark { fill: #04061d; }
```
